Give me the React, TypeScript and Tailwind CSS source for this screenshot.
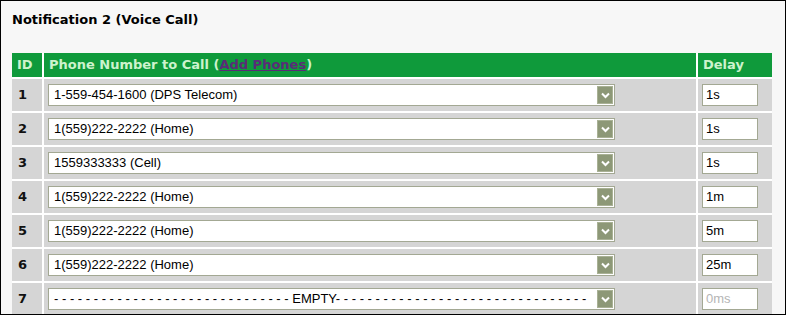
import React from 'react';

const ROWS = [
  { id: 1, phone: '1-559-454-1600 (DPS Telecom)', delay: '1s' },
  { id: 2, phone: '1(559)222-2222 (Home)', delay: '1s' },
  { id: 3, phone: '1559333333 (Cell)', delay: '1s' },
  { id: 4, phone: '1(559)222-2222 (Home)', delay: '1m' },
  { id: 5, phone: '1(559)222-2222 (Home)', delay: '5m' },
  { id: 6, phone: '1(559)222-2222 (Home)', delay: '25m' },
  { id: 7, phone: '', delay: '' },
];

const dashes = (n: number) => Array(n).fill('-').join(' ');

function Arrow() {
  return (
    <div className="absolute right-[1px] top-[1px] w-[16px] h-[18px] bg-[#8d9877] border border-[#a9b195] flex items-center justify-center">
      <svg width="9" height="7" viewBox="0 0 9 7">
        <path d="M1 1.5 L4.5 5 L8 1.5" fill="none" stroke="#ffffff" strokeWidth="2" />
      </svg>
    </div>
  );
}

export default function App() {
  return (
    <div className="w-[786px] h-[315px] border border-black bg-[#f7f7f7] overflow-hidden pl-[11px]">
      <div className="pt-[11px] h-[52px] font-['DejaVu_Sans',sans-serif] font-bold text-[13px] text-black leading-[16px]">
        Notification 2 (Voice Call)
      </div>

      <div className="grid grid-cols-[30px_652px_74px] gap-[2px] bg-white w-[760px] font-['DejaVu_Sans',sans-serif]">
        {/* Header */}
        <div className="h-[24px] bg-[#0f9a3b] text-[#cdf3cd] font-bold text-[13px] flex items-center pl-[5px]">ID</div>
        <div className="h-[24px] bg-[#0f9a3b] text-[#cdf3cd] font-bold text-[13px] flex items-center pl-[5px]">
          Phone Number to Call (<span className="text-[#5a2b78] underline">Add Phones</span>)
        </div>
        <div className="h-[24px] bg-[#0f9a3b] text-[#cdf3cd] font-bold text-[13px] flex items-center pl-[5px]">Delay</div>

        {ROWS.map((r) => (
          <React.Fragment key={r.id}>
            <div className="h-[32px] bg-[#d5d5d5] flex items-center pl-[6px] font-bold text-[13px] text-[#111]">
              {r.id}
            </div>
            <div className="h-[32px] bg-[#d5d5d5] flex items-center pl-[4px]">
              <div className="relative w-[567px] h-[22px] bg-white border border-[#a3a893] flex items-center pl-[5px] font-['Liberation_Sans',Arial,sans-serif] text-[13px] text-black whitespace-nowrap overflow-hidden">
                {r.phone || (
                  <span>
                    {dashes(30)} EMPTY{dashes(32)}
                  </span>
                )}
                <Arrow />
              </div>
            </div>
            <div className="h-[32px] bg-[#d5d5d5] flex items-center pl-[4px]">
              <div className="w-[56px] h-[22px] bg-white border border-[#a3a893] flex items-center pl-[3px] font-['Liberation_Sans',Arial,sans-serif] text-[13px]">
                {r.delay ? <span className="text-black">{r.delay}</span> : <span className="text-[#b5b5b5]">0ms</span>}
              </div>
            </div>
          </React.Fragment>
        ))}
      </div>
    </div>
  );
}
